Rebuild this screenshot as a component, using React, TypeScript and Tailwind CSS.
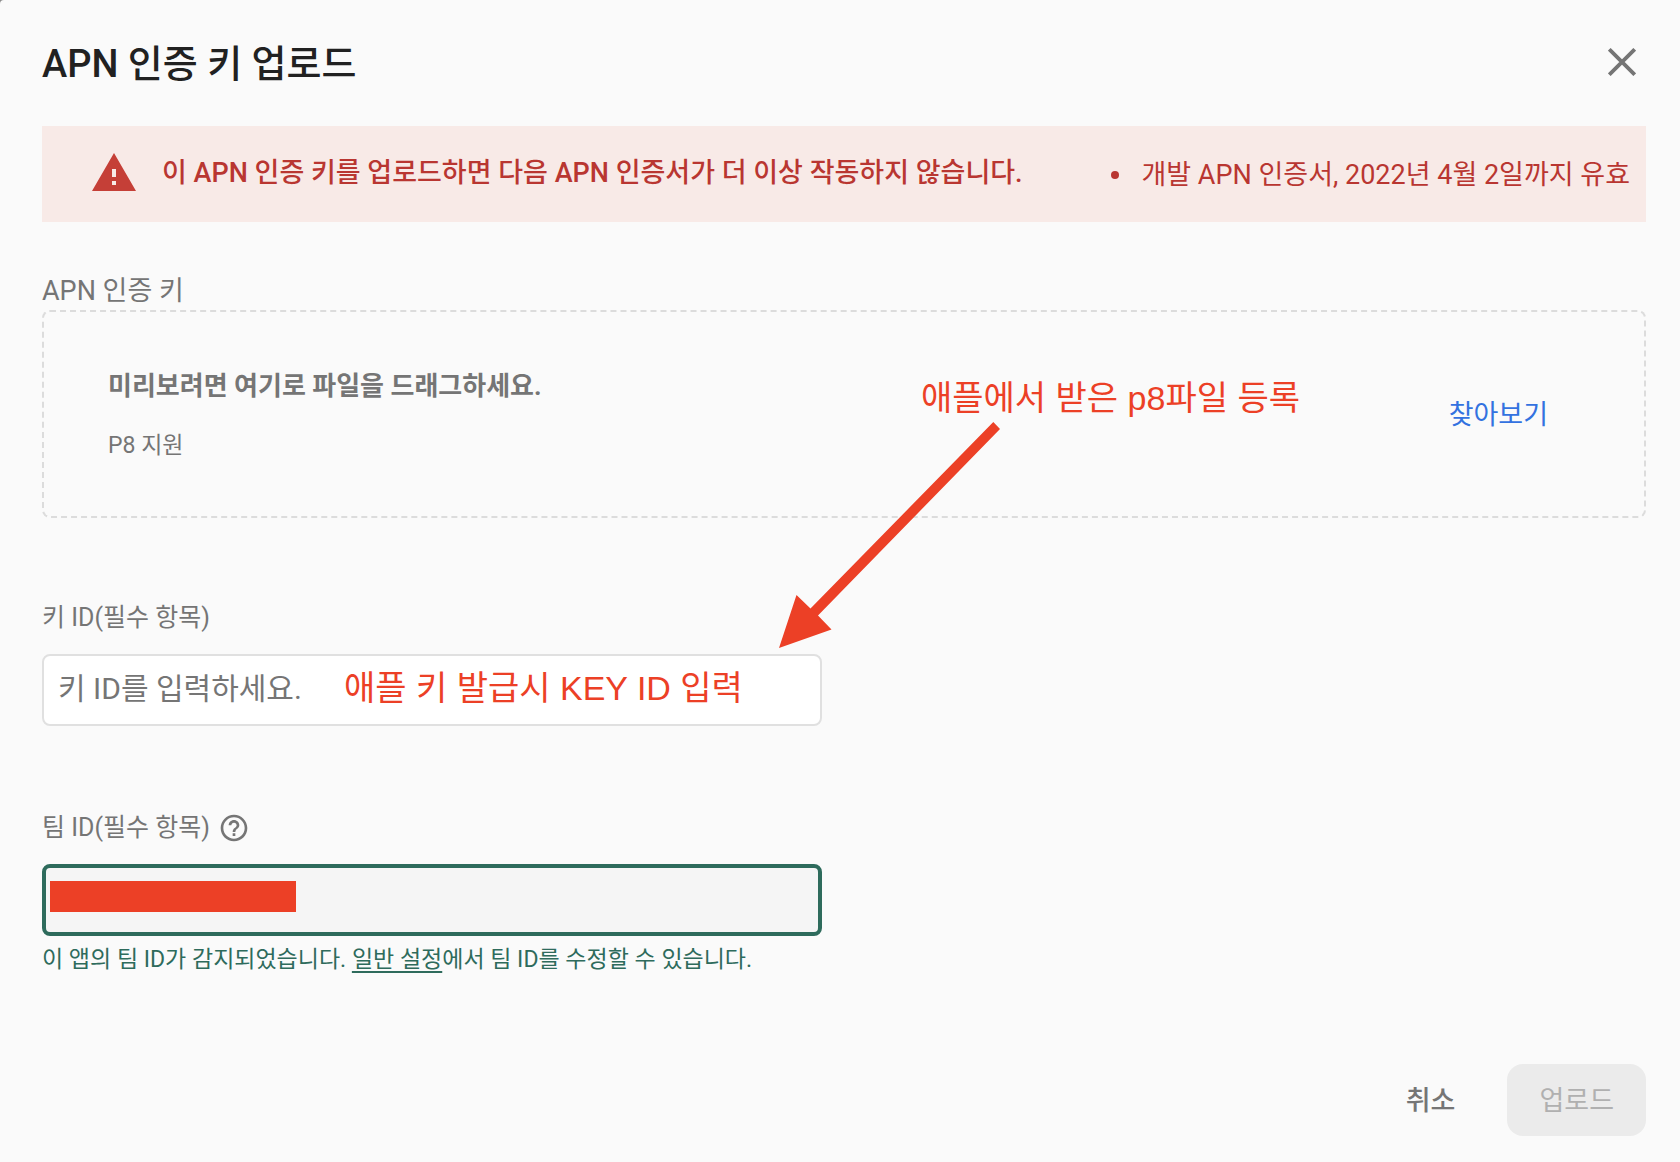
import { useState } from 'react'
import type { ReactNode } from 'react'

interface AnnotationProps {
  className: string
  children: ReactNode
}

function Annotation({ className, children }: AnnotationProps) {
  return (
    <span
      className={`pointer-events-none absolute whitespace-nowrap font-['Liberation_Sans','Noto_Sans_CJK_KR',sans-serif] text-[34px] leading-10 text-[#ec4026] ${className}`}
    >
      {children}
    </span>
  )
}

function WarningIcon() {
  return (
    <svg viewBox="0 0 24 24" className="h-12 w-12 shrink-0 fill-[#c53f37]" aria-hidden="true">
      <path d="M1 21h22L12 2 1 21zm12-3h-2v-2h2v2zm0-4h-2v-4h2v4z" />
    </svg>
  )
}

function CloseIcon() {
  return (
    <svg viewBox="0 0 28 28" className="h-7 w-7" fill="none" stroke="#757575" strokeWidth="3.8" aria-hidden="true">
      <path d="M1.3 1.3 26.7 26.7M26.7 1.3 1.3 26.7" />
    </svg>
  )
}

function HelpIcon() {
  return (
    <svg viewBox="0 0 24 24" className="h-8 w-8 fill-[#757575]" aria-hidden="true">
      <path d="M11 18h2v-2h-2v2zm1-16C6.48 2 2 6.48 2 12s4.48 10 10 10 10-4.48 10-10S17.52 2 12 2zm0 18c-4.41 0-8-3.59-8-8s3.59-8 8-8 8 3.59 8 8-3.59 8-8 8zm0-14c-2.21 0-4 1.79-4 4h2c0-1.1.9-2 2-2s2 .9 2 2c0 2-3 1.75-3 5h2c0-2.25 3-2.5 3-5 0-2.21-1.79-4-4-4z" />
    </svg>
  )
}

export default function App() {
  const [keyId, setKeyId] = useState('')

  return (
    <div className="min-h-screen bg-[#8a8a8a]">
      <main className="min-h-screen rounded-tl bg-[#fafafa] pr-[34px] pb-6 pl-[42px] font-['Roboto','Noto_Sans_CJK_KR',sans-serif] text-[#757575]">
        <header className="flex items-start justify-between pt-9 pb-[34px]">
          <h1 className="text-[38px] leading-[56px] font-medium text-[#212121]">APN 인증 키 업로드</h1>
          <button type="button" aria-label="닫기" className="mt-3 mr-2.5">
            <CloseIcon />
          </button>
        </header>

        <div className="flex h-24 items-center justify-between bg-[#f8eae7] pr-4 pl-12 text-[#b93631]">
          <div className="flex items-center pb-0.5">
            <WarningIcon />
            <p className="ml-6 text-[27px] leading-10 font-medium">
              이 APN 인증 키를 업로드하면 다음 APN 인증서가 더 이상 작동하지 않습니다.
            </p>
          </div>
          <ul className="pt-0.5 text-[27px] leading-10">
            <li className="flex items-center gap-[22px]">
              <span className="h-2 w-2 rounded-full bg-[#b93631]" />
              개발 APN 인증서, 2022년 4월 2일까지 유효
            </li>
          </ul>
        </div>

        <section className="relative mt-12">
          <h2 className="pt-0.5 text-[27px] leading-[38px]">APN 인증 키</h2>
          <div className="flex h-52 items-center justify-between rounded-lg border-2 border-dashed border-[#dcdcdc] pt-0.5 pr-24 pl-16">
            <div>
              <p className="text-[26px] leading-10 font-bold">미리보려면 여기로 파일을 드래그하세요.</p>
              <p className="mt-[22px] text-[23px] leading-9">P8 지원</p>
            </div>
            <button type="button" className="text-[27px] leading-10 text-[#3372e0]">
              찾아보기
            </button>
          </div>
          <Annotation className="top-[108px] left-[879px]">애플에서 받은 p8파일 등록</Annotation>
          <svg
            viewBox="0 0 222 226"
            className="pointer-events-none absolute top-[152px] left-[737px] h-[226px] w-[222px] fill-[#ec4026]"
            aria-hidden="true"
          >
            <path d="M214.3 0 221 7 39 193.5 52.5 207.5 0 226 17.5 173 31.5 186.5z" />
          </svg>
        </section>

        <div className="mt-20 max-w-[780px]">
          <label htmlFor="key-id" className="block text-[25px] leading-10">
            키 ID(필수 항목)
          </label>
          <div className="relative mt-4">
            <input
              id="key-id"
              type="text"
              value={keyId}
              onChange={(e) => setKeyId(e.target.value)}
              placeholder="키 ID를 입력하세요."
              className="block h-[72px] w-full rounded-lg border-2 border-[#e0e0e0] bg-white px-3.5 pb-1 text-[30px] text-[#212121] outline-none placeholder:text-[#757575]"
            />
            <Annotation className="top-3.5 left-[302px]">애플 키 발급시 KEY ID 입력</Annotation>
          </div>
        </div>

        <div className="mt-[82px] max-w-[780px]">
          <div className="flex items-center gap-2">
            <label htmlFor="team-id" className="text-[25px] leading-10">
              팀 ID(필수 항목)
            </label>
            <button type="button" aria-label="도움말">
              <HelpIcon />
            </button>
          </div>
          <div className="relative mt-4">
            <input
              id="team-id"
              type="text"
              readOnly
              className="block h-[72px] w-full rounded-lg border-4 border-[#2e6b5c] bg-[#f5f5f5] px-3 text-[30px] outline-none"
            />
            <span className="absolute top-[17px] left-2 h-[31px] w-[246px] bg-[#ec4026]" />
          </div>
          <p className="mt-1.5 text-[23px] leading-9 text-[#2e6b5c]">
            이 앱의 팀 ID가 감지되었습니다.{' '}
            <a href="#settings" className="underline decoration-2 underline-offset-4">
              일반 설정
            </a>
            에서 팀 ID를 수정할 수 있습니다.
          </p>
        </div>

        <footer className="mt-[86px] flex justify-end gap-5">
          <button type="button" className="h-[72px] px-8 pt-0.5 text-[27px] font-medium">
            취소
          </button>
          <button
            type="button"
            disabled
            className="h-[72px] rounded-2xl bg-[#ebebeb] px-8 pt-0.5 text-[27px] text-[#b0b0b0]"
          >
            업로드
          </button>
        </footer>
      </main>
    </div>
  )
}
